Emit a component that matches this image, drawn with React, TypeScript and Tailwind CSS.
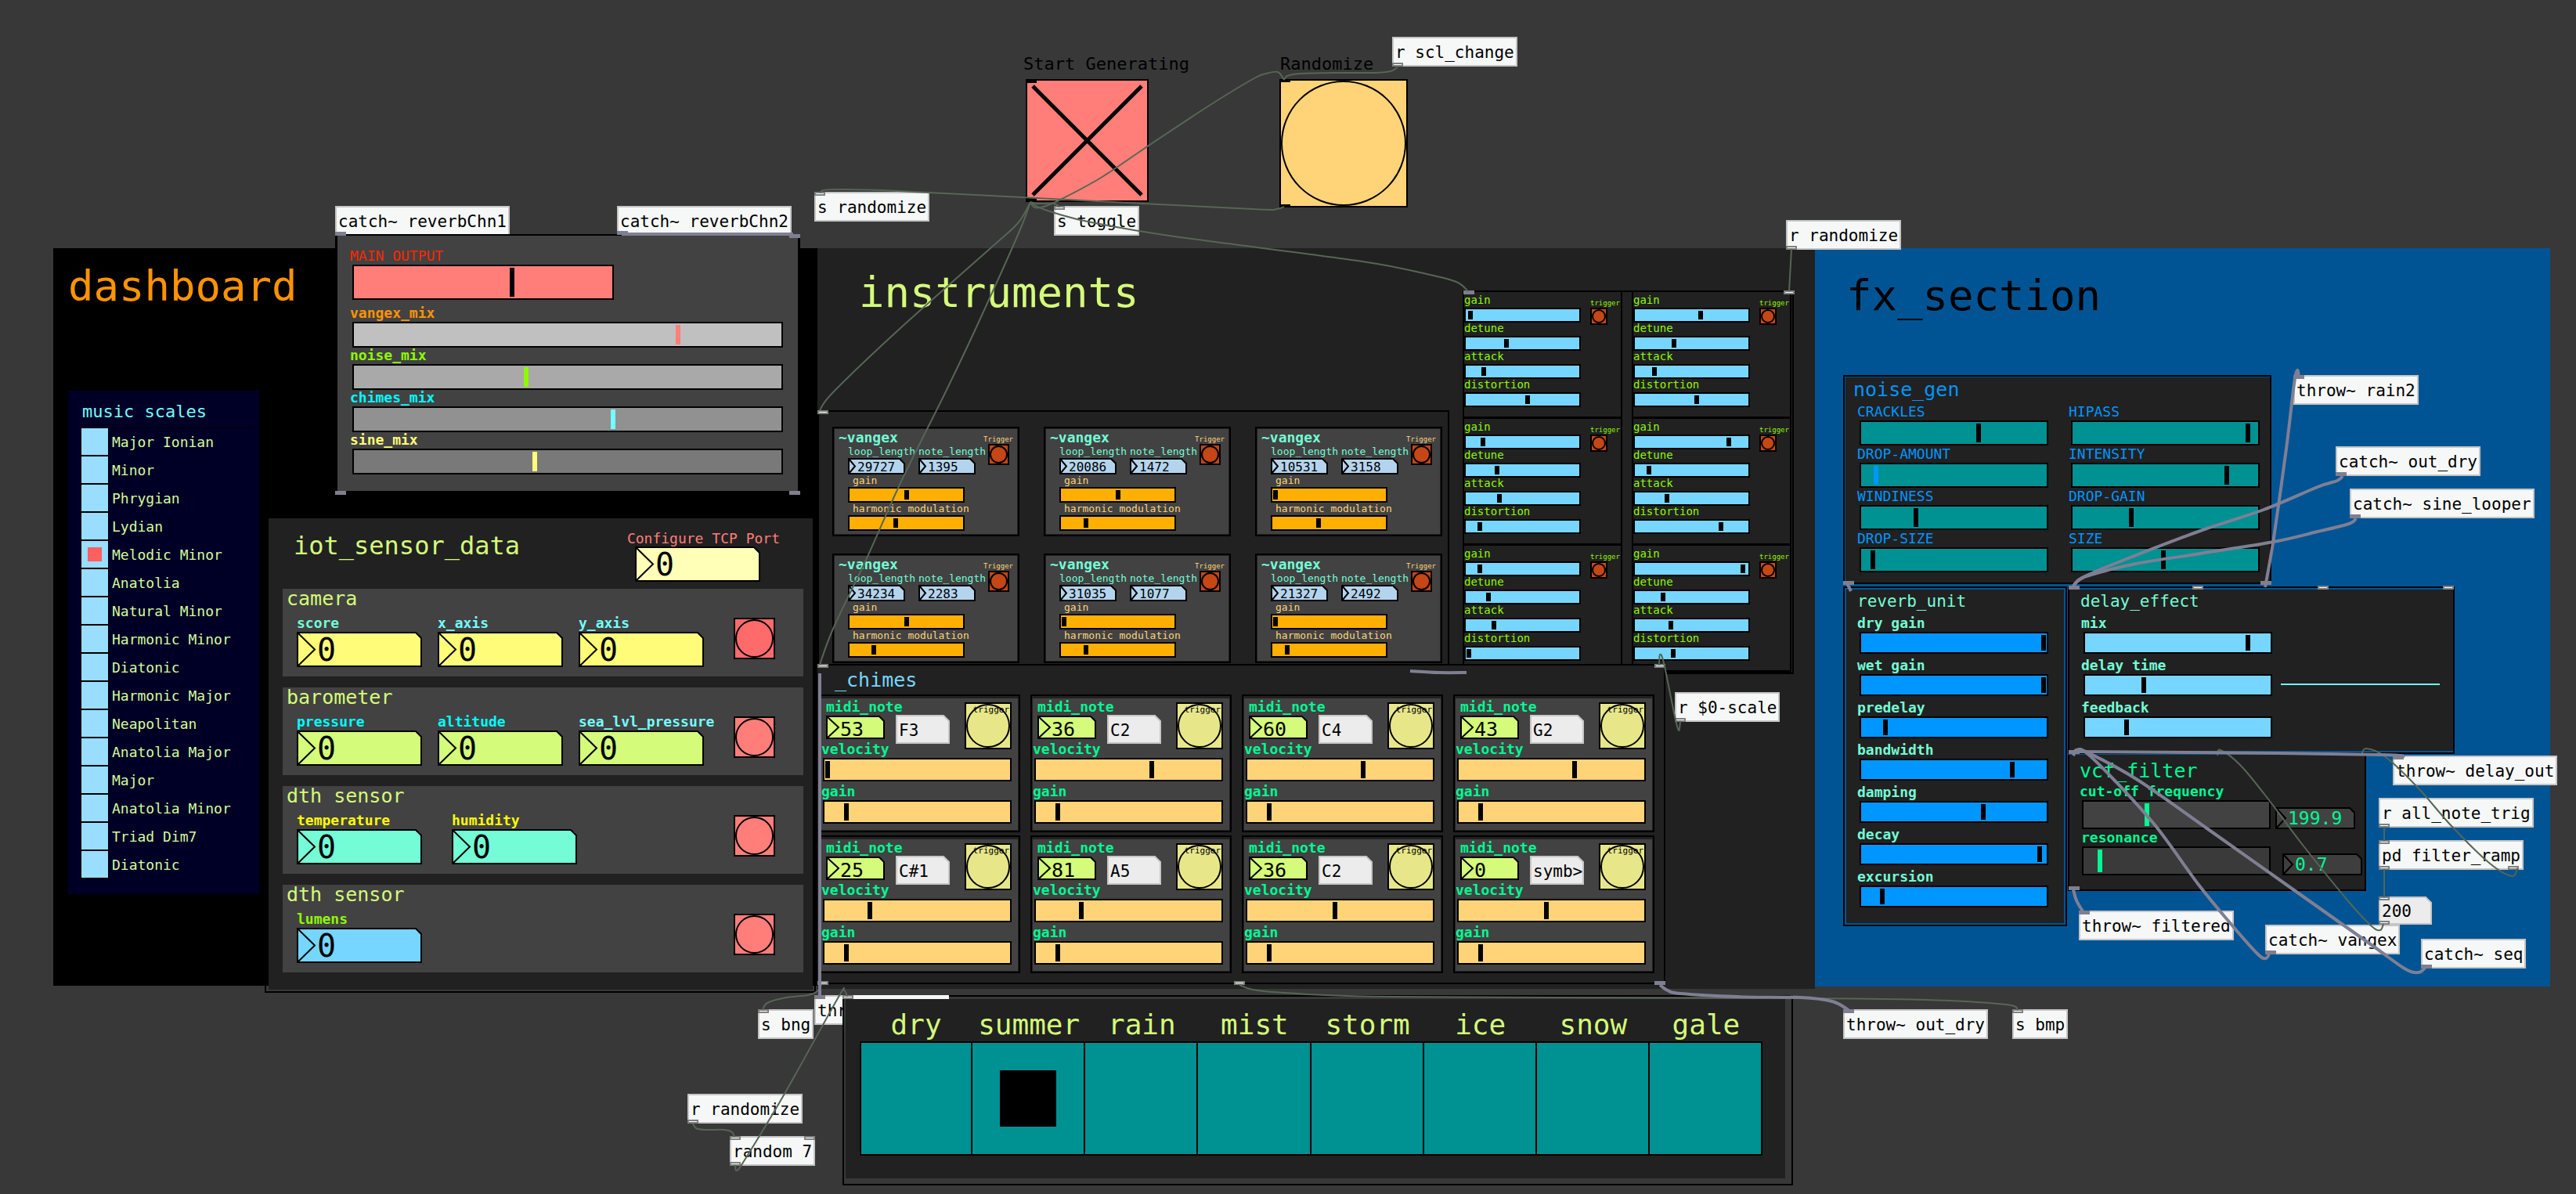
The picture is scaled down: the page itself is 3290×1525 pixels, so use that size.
import React from 'react';

type Pt = [number, number];

/* ---------- canvas primitives ---------- */

function At({ x, y, children }: { x: number; y: number; children: React.ReactNode }) {
  return (
    <div className="absolute" style={{ left: x, top: y }}>
      {children}
    </div>
  );
}

function Slider({ v, max, name, className }: { v: number; max: number; name?: string; className: string }) {
  return (
    <input
      type="range"
      min={0}
      max={max}
      step="any"
      defaultValue={v}
      aria-label={name}
      className={
        'm-0 block w-full appearance-none border-2 border-black px-px py-[2px] [&::-webkit-slider-runnable-track]:h-full [&::-webkit-slider-thumb]:h-full [&::-webkit-slider-thumb]:w-[6px] [&::-webkit-slider-thumb]:appearance-none [&::-webkit-slider-thumb]:rounded-none [&::-webkit-slider-thumb]:bg-current ' +
        className
      }
    />
  );
}

const numKinds = {
  lg: { w: 160, h: 45, arrow: 23, cut: 8, box: 'h-[45px] w-[160px]', input: 'pl-[26px] text-[40px]' },
  md: { w: 75, h: 30, arrow: 16, cut: 7, box: 'h-[30px] w-[75px]', input: 'pl-[18px] pt-1 text-[25px]' },
  sm: { w: 73, h: 21, arrow: 9, cut: 7, box: 'h-[21px] w-[73px]', input: 'pl-[12px] pt-px text-[16px]' },
  fx: { w: 102, h: 28, arrow: 13, cut: 7, box: 'h-[28px] w-[102px]', input: 'pl-[16px] text-[23px]' },
};

function NumBox({
  kind,
  value,
  fill,
  name,
  ink = 'text-black',
}: {
  kind: keyof typeof numKinds;
  value: string;
  fill: string;
  name?: string;
  ink?: string;
}) {
  const k = numKinds[kind];
  return (
    <span className={'relative block font-normal ' + k.box}>
      <svg className="absolute inset-0" width={k.w} height={k.h} stroke="#000" strokeWidth="2">
        <polygon
          fill={fill}
          points={`1,1 ${k.w - k.cut},1 ${k.w - 1},${k.cut} ${k.w - 1},${k.h - 1} 1,${k.h - 1}`}
        />
        <polyline fill="none" points={`1,1 ${k.arrow},${k.h / 2} 1,${k.h - 1}`} />
      </svg>
      <input
        type="text"
        defaultValue={value}
        aria-label={name}
        className={'absolute inset-0 h-full w-full bg-transparent p-0 outline-none ' + ink + ' ' + k.input}
      />
    </span>
  );
}

function Bang({ className, name = 'bang' }: { className: string; name?: string }) {
  return (
    <button type="button" aria-label={name} className={'block border-2 border-black ' + className}>
      <span className="block h-full w-full rounded-full border-2 border-black" />
    </button>
  );
}

function Port({ x, y, sig }: { x: number; y: number; sig?: boolean }) {
  return (
    <div
      className={
        sig ? 'absolute h-[5px] w-[14px] bg-[#7f7f90]' : 'absolute h-[5px] w-[14px] border-2 border-[#808080] bg-white'
      }
      style={{ left: x, top: y }}
    />
  );
}

function Obj({ x, y, text, wide }: { x: number; y: number; text: string; wide?: boolean }) {
  return (
    <div
      className={
        'absolute h-[38px] border-2 border-[#c6c6c6] bg-[#f6f8f8] px-[2px] text-[21px] leading-[36px] whitespace-pre text-black ' +
        (wide ? 'w-[172px]' : '')
      }
      style={{ left: x, top: y }}
    >
      {text}
    </div>
  );
}

/* ---------- dashboard ---------- */

const scales = [
  'Major Ionian', 'Minor', 'Phrygian', 'Lydian', 'Melodic Minor', 'Anatolia', 'Natural Minor', 'Harmonic Minor',
  'Diatonic', 'Harmonic Major', 'Neapolitan', 'Anatolia Major', 'Major', 'Anatolia Minor', 'Triad Dim7', 'Diatonic',
];

function MusicScales() {
  return (
    <fieldset aria-label="music scales" className="w-[244px] bg-[#000026] pt-[15px] pr-2 pb-[19px] pl-4">
      <div className="mb-2 pl-[2px] text-[22px] leading-6 text-[#73fdff]">music scales</div>
      <div className="border-t border-black">
        {scales.map((s, i) => (
          <label key={i} className="flex h-9 items-center gap-1 text-[18px] leading-[38px] text-[#d4fb9c]">
            <span className="flex h-9 w-9 items-center justify-center border-x border-b-2 border-black bg-[#99ddff]">
              <input
                type="radio"
                name="scale"
                defaultChecked={i === 4}
                className="size-[18px] appearance-none checked:bg-[#ff5f5f]"
              />
            </span>
            {s}
          </label>
        ))}
      </div>
    </fieldset>
  );
}

const mixes = [
  { n: 'vangex_mix', c: 'text-[#ff9300]', s: 'bg-[#c0c0c0] text-[#ff7e79]', v: 410 },
  { n: 'noise_mix', c: 'text-[#8efa00]', s: 'bg-[#a9a9a9] text-[#8efa00]', v: 216 },
  { n: 'chimes_mix', c: 'text-[#00fdff]', s: 'bg-[#919191] text-[#73fdff]', v: 327 },
  { n: 'sine_mix', c: 'text-[#fffc79]', s: 'bg-[#797979] text-[#fffc79]', v: 227 },
];

function MixPanel() {
  return (
    <div className="w-[594px] border-x-[3px] border-t-2 border-b-[5px] border-black bg-[#424242] pt-4 pr-[19px] pb-[21px] pl-[19px] text-[18px] leading-[19px]">
      <label className="mb-[7px] block w-[334px] text-[#ff2600]">
        <span className="-ml-[3px] block pb-[2px]">MAIN OUTPUT</span>
        <Slider v={198} max={322} className="h-[45px] bg-[#ff7e79] text-black" />
      </label>
      {mixes.map((m) => (
        <label key={m.n} className={'block ' + m.c}>
          <span className="-ml-[3px] block pb-[2px] font-bold">{m.n}</span>
          <Slider v={m.v} max={538} className={'h-[33px] ' + m.s} />
        </label>
      ))}
    </div>
  );
}

const sensors = [
  { t: 'camera', fill: '#fffc79', bang: 'bg-[#ff6b6b]', gap: 'gap-5', f: [['score', 'text-[#73fcd6]'], ['x_axis', 'text-[#73fdff]'], ['y_axis', 'text-[#73fdff]']] },
  { t: 'barometer', fill: '#d4fb79', bang: 'bg-[#ff7e79]', gap: 'gap-5', f: [['pressure', 'text-[#00fdff]'], ['altitude', 'text-[#00fdff]'], ['sea_lvl_pressure', 'text-[#73fdff]']] },
  { t: 'dth sensor', fill: '#73fcd6', bang: 'bg-[#ff7e79]', gap: 'gap-[38px]', f: [['temperature', 'text-[#fffb00]'], ['humidity', 'text-[#fffb00]']] },
  { t: 'dth sensor', fill: '#76d6ff', bang: 'bg-[#ff7e79]', gap: 'gap-5', f: [['lumens', 'text-[#8efa00]']] },
];

function SensorPanel() {
  return (
    <div className="w-[704px] border-2 border-black pt-[2px] pr-[2px] pb-[2px] pl-[3px]">
      <div className="bg-[#212121] pt-[15px] pr-3 pb-[22px] pl-[18px]">
        <div className="mb-[9px] flex items-start justify-between">
          <h2 className="pt-1 pl-[14px] text-[32px] leading-8 text-[#d4fb79]">iot_sensor_data</h2>
          <label className="mr-[30px] block text-[18px] leading-[21px] text-[#ff7e79]">
            Configure TCP Port
            <span className="block pl-[10px]">
              <NumBox kind="lg" value="0" fill="#ffffb8" />
            </span>
          </label>
        </div>
        <div className="flex flex-col gap-[14px]">
          {sensors.map((s, i) => (
            <section key={i} className="h-[112px] bg-[#424242]">
              <h3 className="mb-2 pl-[5px] text-[25px] leading-[26px] text-[#d4fb79]">{s.t}</h3>
              <div className="flex items-start justify-between pr-[36px] pl-[18px]">
                <div className={'flex ' + s.gap}>
                  {s.f.map(([n, c]) => (
                    <label key={n} className={'block w-[160px] text-[18px] leading-[19px] font-bold whitespace-nowrap ' + c}>
                      <span className="block pb-[2px]">{n}</span>
                      <NumBox kind="lg" value="0" fill={s.fill} />
                    </label>
                  ))}
                </div>
                <Bang className={'mt-[3px] size-[53px] ' + s.bang} name={s.t} />
              </div>
            </section>
          ))}
        </div>
      </div>
    </div>
  );
}

/* ---------- instruments ---------- */

const vangex = [
  { l: '29727', n: '1395', g: 69, h: 55 },
  { l: '20086', n: '1472', g: 69, h: 28 },
  { l: '10531', n: '3158', g: 0, h: 55 },
  { l: '34234', n: '2283', g: 69, h: 27 },
  { l: '31035', n: '1077', g: 0, h: 28 },
  { l: '21327', n: '2492', g: 0, h: 15 },
];

function VangexPanel() {
  return (
    <div className="grid w-[807px] grid-cols-3 gap-x-[31px] gap-y-[22px] border-2 border-black bg-[#212121] pt-[19px] pr-[7px] pb-2 pl-[17px]">
      {vangex.map((c, i) => (
        <div key={i} className="h-[140px] border-2 border-black bg-[#212121] p-px">
          <div className="flex h-full justify-between bg-[#424242] pr-[5px] pl-[5px]">
            <div>
              <div className="text-[18px] leading-[21px] font-bold text-[#73fcd6]">~vangex</div>
              <div className="pl-3 text-[13px] leading-4">
                <div className="flex gap-[17px] text-[#73fcd6]">
                  <label className="block w-[73px] whitespace-nowrap">
                    loop_length
                    <NumBox kind="sm" value={c.l} fill="#b4d4ee" />
                  </label>
                  <label className="block w-[73px] whitespace-nowrap">
                    note_length
                    <NumBox kind="sm" value={c.n} fill="#b4d4ee" />
                  </label>
                </div>
                <label className="block w-[149px] text-[#ffd479]">
                  <span className="block pl-[6px]">gain</span>
                  <Slider v={c.g} max={137} className="h-5 bg-[#ffaf00] text-black" />
                </label>
                <label className="block w-[149px] whitespace-nowrap text-[#ffd479]">
                  <span className="block pl-[6px]">harmonic modulation</span>
                  <Slider v={c.h} max={137} className="h-5 bg-[#ffaf00] text-black" />
                </label>
              </div>
            </div>
            <div className="flex flex-col items-center pt-[7px] text-[9px] leading-3 text-[#ffd479]">
              Trigger
              <Bang className="size-[27px] bg-[#c44715]" name="trigger" />
            </div>
          </div>
        </div>
      ))}
    </div>
  );
}

const sines = [
  [2, 48, 19, 75],
  [80, 46, 21, 75],
  [18, 36, 39, 14],
  [116, 14, 37, 106],
  [14, 25, 32, 0],
  [134, 32, 42, 45],
];
const sineNames = ['gain', 'detune', 'attack', 'distortion'];

function SinePanel() {
  return (
    <div className="grid w-[423px] grid-cols-[204px_204px] gap-x-3 border-2 border-l-0 border-black bg-[#212121] pr-[3px]">
      {sines.map((vals, i) => (
        <div key={i} className="flex h-[162px] border-x-2 border-b-[3px] border-black">
          <div className="w-[149px] pt-[3px]">
            {sineNames.map((n, j) => (
              <label key={n} className="block text-[14px] leading-[15px] text-[#8efa00]">
                <span className="block pb-[2px]">{n}</span>
                <Slider v={vals[j]} max={137} className="h-[19px] bg-[#76d6ff] text-black" />
              </label>
            ))}
          </div>
          <div className="pt-2 pl-3 text-[9px] leading-3 text-[#8efa00]">
            trigger
            <Bang className="size-[22px] bg-[#c44715]" name="trigger" />
          </div>
        </div>
      ))}
    </div>
  );
}

const chimes = [
  { m: '53', n: 'F3', v: 0 },
  { m: '36', n: 'C2', v: 144 },
  { m: '60', n: 'C4', v: 144 },
  { m: '43', n: 'G2', v: 144 },
  { m: '25', n: 'C#1', v: 54 },
  { m: '81', n: 'A5', v: 54 },
  { m: '36', n: 'C2', v: 108 },
  { m: '0', n: 'symb>', v: 108 },
];

function ChimesPanel() {
  return (
    <div className="w-[1083px] border-t-2 border-r-2 border-b-2 border-black bg-[#212121] pb-3">
      <h3 className="pl-[22px] text-[25px] leading-[37px] text-[#76d6ff]">_chimes</h3>
      <div className="grid grid-cols-[257px_257px_257px_257px] gap-x-[13px] gap-y-1 pl-[2px]">
        {chimes.map((c, i) => (
          <div key={i} className="h-[176px] border-2 border-black bg-[#212121] p-px pt-[3px]">
            <div className="h-full bg-[#424242] pr-[8px] pl-[2px] text-[18px] leading-[19px] font-bold text-[#00fa92]">
              <div className="flex items-start justify-between">
                <div className="flex gap-[14px] pt-px pl-1">
                  <label className="block w-[75px] whitespace-nowrap">
                    <span className="block pb-[2px]">midi_note</span>
                    <NumBox kind="md" value={c.m} fill="#d4fb79" />
                  </label>
                  <div className="relative mt-5 h-[37px] w-[69px] font-normal">
                    <svg className="absolute inset-0" width="69" height="37">
                      <polygon points="1,1 61,1 68,8 68,36 1,36" fill="#ececec" stroke="#c6c6c6" strokeWidth="2" />
                    </svg>
                    <input
                      aria-label="note name"
                      defaultValue={c.n}
                      className="absolute inset-0 h-full w-full bg-transparent pt-[2px] pl-1 text-[21px] text-black outline-none"
                    />
                  </div>
                </div>
                <div className="relative pt-[5px] font-normal">
                  <Bang className="size-[60px] bg-[#e7e78a]" name="trigger" />
                  <span className="pointer-events-none absolute top-[9px] right-[3px] text-[11px] leading-3 text-black">
                    trigger
                  </span>
                </div>
              </div>
              <label className="-mt-[10px] block w-[150px] whitespace-nowrap">
                <span className="-ml-[2px] block pb-[2px]">velocity</span>
                <span className="block w-[241px]">
                  <Slider v={c.v} max={229} className="h-[30px] bg-[#ffd479] text-black" />
                </span>
              </label>
              <label className="mt-[3px] block">
                <span className="-ml-[2px] block pb-[2px]">gain</span>
                <span className="block w-[241px]">
                  <Slider v={24} max={229} className="h-[30px] bg-[#ffd479] text-black" />
                </span>
              </label>
            </div>
          </div>
        ))}
      </div>
    </div>
  );
}

/* ---------- effects ---------- */

const noise: [string, number, string][] = [
  ['CRACKLES', 146, 'text-black'],
  ['HIPASS', 220, 'text-black'],
  ['DROP-AMOUNT', 15, 'text-[#0096ff]'],
  ['INTENSITY', 193, 'text-black'],
  ['WINDINESS', 66, 'text-black'],
  ['DROP-GAIN', 71, 'text-black'],
  ['DROP-SIZE', 11, 'text-black'],
  ['SIZE', 112, 'text-black'],
];

function NoisePanel() {
  return (
    <div className="w-[547px] border-2 border-black bg-[#005493] pt-px pl-px">
      <div className="bg-[#212121] pt-[3px] pr-3 pb-[13px] pl-[18px]">
        <h3 className="mb-1 -ml-[8px] text-[25px] leading-[26px] text-[#0096ff]">noise_gen</h3>
        <div className="grid grid-cols-[241px_241px] gap-x-[29px] text-[18px] leading-[22px] text-[#0096ff]">
          {noise.map(([n, v, c]) => (
            <label key={n} className="block">
              <span className="-ml-[3px] block">{n}</span>
              <Slider v={v} max={229} className={'h-8 bg-[#009193] ' + c} />
            </label>
          ))}
        </div>
      </div>
    </div>
  );
}

function EffectFields({ items, bar }: { items: [string, number][]; bar: string }) {
  return (
    <div className="flex w-[241px] flex-col gap-1 text-[18px] leading-[22px] text-[#73fcd6]">
      {items.map(([n, v]) => (
        <label key={n} className="block">
          <span className="-ml-[3px] block font-bold">{n}</span>
          <Slider v={v} max={229} className={'h-[28px] text-black ' + bar} />
        </label>
      ))}
    </div>
  );
}

const reverb: [string, number][] = [
  ['dry gain', 229],
  ['wet gain', 229],
  ['predelay', 27],
  ['bandwidth', 189],
  ['damping', 152],
  ['decay', 224],
  ['excursion', 23],
];

function ReverbPanel() {
  return (
    <div className="w-[286px] border-2 border-black bg-[#005493] p-[2px]">
      <div className="bg-[#212121] pt-[3px] pb-5 pl-[17px]">
        <h3 className="mb-[5px] -ml-[3px] text-[21px] leading-6 text-[#73fcd6]">reverb_unit</h3>
        <EffectFields items={reverb} bar="bg-[#0096ff]" />
      </div>
    </div>
  );
}

function DelayPanel() {
  return (
    <div className="w-[494px] border-2 border-black bg-[#005493] py-[2px]">
      <div className="bg-[#212121] pt-[3px] pb-4 pl-[18px]">
        <h3 className="mb-[5px] -ml-[4px] text-[21px] leading-6 text-[#73fcd6]">delay_effect</h3>
        <div className="flex items-center gap-[11px]">
          <EffectFields items={[['mix', 204], ['delay time', 71], ['feedback', 49]]} bar="bg-[#76d6ff]" />
          <div className="mt-5 h-[2px] w-[203px] bg-[#73f5f0]" />
        </div>
      </div>
    </div>
  );
}

function VcfPanel() {
  return (
    <div className="h-[174px] w-[381px] border-2 border-t-0 border-black bg-[#212121] pt-2 pl-4 text-[18px] leading-[22px] text-[#00fa92]">
      <h3 className="mb-[2px] -ml-[3px] text-[25px] leading-[26px]">vcf_filter</h3>
      <div className="flex items-end gap-[6px]">
        <label className="block w-[241px] whitespace-nowrap">
          <span className="-ml-[3px] block font-bold">cut-off frequency</span>
          <Slider v={77} max={229} className="h-[37px] bg-[#424242] text-[#00fa92]" />
        </label>
        <NumBox kind="fx" value="199.9" fill="#424242" ink="text-[#00fa92]" name="frequency" />
      </div>
      <div className="flex items-end gap-[15px]">
        <label className="block w-[241px]">
          <span className="-ml-[1px] block font-bold">resonance</span>
          <Slider v={17} max={229} className="h-[37px] bg-[#3a3a3a] text-[#00fa92]" />
        </label>
        <NumBox kind="fx" value="0.7" fill="#3e3e3e" ink="text-[#00fa92]" name="resonance value" />
      </div>
    </div>
  );
}

/* ---------- presets ---------- */

const presets = ['dry', 'summer', 'rain', 'mist', 'storm', 'ice', 'snow', 'gale'];

function PresetPanel() {
  return (
    <div className="w-[1214px] border-2 border-black bg-[#383838] pt-[3px] pr-2 pb-[7px] pl-[2px]">
      <fieldset aria-label="presets" className="bg-[#212121] px-[18px] pt-3 pb-[29px]">
        <div className="grid w-[1153px] grid-cols-8 text-center text-[36px] leading-[42px] text-[#d4fb79]">
          {presets.map((p, i) => (
            <label key={p} className="block whitespace-nowrap">
              <span className="block">{p}</span>
              <span
                className={
                  'flex h-[146px] items-center justify-center border-y-2 border-r-2 border-black bg-[#009193] ' +
                  (i === 0 ? 'border-l-2' : '')
                }
              >
                <input
                  type="radio"
                  name="preset"
                  defaultChecked={i === 1}
                  className="size-[72px] appearance-none checked:bg-black"
                />
              </span>
            </label>
          ))}
        </div>
      </fieldset>
    </div>
  );
}

/* ---------- patch cords ---------- */

function curve(p: Pt[]) {
  let d = `M${p[0][0]} ${p[0][1]}`;
  for (let i = 0; i < p.length - 1; i++) {
    const a = p[Math.max(i - 1, 0)];
    const b = p[i];
    const c = p[i + 1];
    const e = p[Math.min(i + 2, p.length - 1)];
    d += ` C${b[0] + (c[0] - a[0]) / 6} ${b[1] + (c[1] - a[1]) / 6} ${c[0] - (e[0] - b[0]) / 6} ${c[1] - (e[1] - b[1]) / 6} ${c[0]} ${c[1]}`;
  }
  return d;
}

const controlCords: Pt[][] = [
  [[1785, 86], [1776, 91], [1755, 93], [1712, 93], [1660, 94], [1644, 97], [1640, 102]],
  [[1316, 258], [1320, 264], [1329, 265], [1350, 257], [1406, 227], [1464, 188], [1541, 137], [1600, 101], [1617, 94], [1632, 92], [1640, 102]],
  [[1316, 258], [1325, 260], [1345, 260], [1353, 264]],
  [[1316, 258], [1300, 285], [1265, 317], [1149, 420], [1065, 500], [1047, 524]],
  [[1316, 258], [1300, 300], [1246, 420], [1208, 500], [1150, 617], [1107, 713], [1064, 803], [1047, 849]],
  [[1316, 258], [1325, 264], [1347, 272], [1394, 284], [1500, 302], [1734, 333], [1822, 350], [1860, 360], [1875, 372]],
  [[1640, 264], [1630, 267], [1600, 267], [1382, 256], [1147, 244], [1070, 242], [1052, 243], [1047, 246]],
  [[2288, 318], [2285, 372]],
  [[2146, 921], [2144, 933], [2139, 915], [2125, 847], [2120, 836], [2119, 850]],
  [[1049, 1258], [1044, 1266], [1032, 1271], [1004, 1274], [980, 1281], [974, 1290]],
  [[939, 1488], [941, 1495], [952, 1480], [1002, 1397], [1070, 1275], [1078, 1265], [1082, 1273]],
  [[885, 1435], [889, 1441], [900, 1443], [925, 1443], [935, 1446], [938, 1452]],
  [[1583, 1258], [1600, 1264], [1641, 1268], [1778, 1273], [2300, 1275], [2460, 1277], [2562, 1283], [2577, 1290]],
  [[2832, 965], [2836, 958], [2862, 978], [2898, 1022], [2940, 1078], [3000, 1152], [3029, 1183], [3040, 1188], [3044, 1180]],
  [[3016, 965], [3022, 956], [3047, 967], [3089, 1007], [3131, 1055], [3179, 1102], [3208, 1119], [3215, 1109]],
  [[3045, 1056], [3045, 1074]],
  [[3045, 1110], [3045, 1146]],
];

const signalCords: Pt[][] = [
  [[794, 299], [1013, 299]],
  [[2120, 1258], [2130, 1265], [2146, 1269], [2219, 1273], [2300, 1274], [2340, 1279], [2361, 1290]],
  [[1047, 860], [1047, 1272]],
  [[1801, 857], [1837, 859], [1873, 859]],
  [[2359, 745], [2364, 755]],
  [[2647, 750], [2659, 738], [2708, 717], [2810, 678], [2891, 651], [2960, 622], [2985, 614], [2992, 608]],
  [[2647, 750], [2655, 741], [2671, 734], [2728, 720], [2810, 707], [2904, 692], [2960, 679], [3000, 669], [3009, 662]],
  [[2893, 750], [2904, 687], [2920, 573], [2930, 490], [2934, 473], [2936, 481]],
  [[2647, 960], [2800, 961], [3045, 964], [3063, 968]],
  [[2648, 965], [2652, 958], [2664, 961], [2700, 996], [2754, 1056], [2808, 1130], [2850, 1181], [2883, 1218], [2894, 1224], [2899, 1216]],
  [[2648, 965], [2652, 958], [2668, 962], [2730, 996], [2820, 1059], [2940, 1144], [3029, 1207], [3071, 1237], [3089, 1242], [3098, 1235]],
  [[2648, 1136], [2652, 1150], [2660, 1164]],
];

function Cords() {
  return (
    <svg className="pointer-events-none absolute top-0 left-0" width="3290" height="1525" fill="none">
      <g stroke="#566655" strokeWidth="2">
        {controlCords.map((p, i) => (
          <path key={i} d={curve(p)} />
        ))}
      </g>
      <g stroke="#7f7f94" strokeWidth="4">
        {signalCords.map((p, i) => (
          <path key={i} d={curve(p)} />
        ))}
      </g>
    </svg>
  );
}

/* ---------- patch ---------- */

const objects = [
  { x: 1040, y: 245, text: 's randomize' },
  { x: 1346, y: 263, text: 's toggle' },
  { x: 1778, y: 47, text: 'r scl_change' },
  { x: 2281, y: 281, text: 'r randomize' },
  { x: 2139, y: 884, text: 'r $0-scale' },
  { x: 2929, y: 479, text: 'throw~ rain2' },
  { x: 2983, y: 570, text: 'catch~ out_dry' },
  { x: 3001, y: 624, text: 'catch~ sine_looper' },
  { x: 3056, y: 965, text: 'throw~ delay_out' },
  { x: 3038, y: 1019, text: 'r all_note_trig' },
  { x: 3038, y: 1073, text: 'pd filter_ramp' },
  { x: 2655, y: 1163, text: 'throw~ filtered' },
  { x: 2893, y: 1181, text: 'catch~ vangex' },
  { x: 3092, y: 1199, text: 'catch~ seq' },
  { x: 2354, y: 1289, text: 'throw~ out_dry' },
  { x: 2570, y: 1289, text: 's bmp' },
  { x: 968, y: 1289, text: 's bng' },
  { x: 878, y: 1397, text: 'r randomize' },
  { x: 932, y: 1451, text: 'random 7' },
];

const controlPorts: Pt[] = [
  [1040, 245], [1346, 263], [1778, 80], [2281, 314], [2139, 917], [3038, 1052], [3038, 1073], [3038, 1106],
  [3203, 1106], [3038, 1145], [3038, 1176], [2570, 1289], [968, 1289], [878, 1430], [932, 1451], [1027, 1451],
  [932, 1484], [1044, 524], [1044, 848], [2113, 848], [1044, 1253], [1576, 1253], [1076, 1271], [2278, 371],
  [2800, 748], [2960, 748], [3120, 748],
];
const signalPorts: Pt[] = [
  [428, 296], [788, 295], [1008, 299], [428, 627], [1008, 627], [2113, 1253], [2929, 479], [2983, 603], [3001, 657],
  [3056, 965], [2655, 1163], [2893, 1214], [3092, 1232], [2354, 1289], [1040, 1271], [2354, 742], [2887, 742],
  [2642, 748], [2642, 958], [2642, 1132], [1869, 371],
];

export default function App() {
  return (
    <main className="relative min-h-screen w-full overflow-hidden bg-[#383838] font-['DejaVu_Sans_Mono',monospace] text-black">
      <At x={68} y={317}>
        <section className="h-[942px] w-[976px] bg-black" />
      </At>
      <At x={1044} y={317}>
        <section className="h-[946px] w-[1274px] bg-[#212121]" />
      </At>
      <At x={2318} y={317}>
        <section className="h-[943px] w-[939px] bg-[#005493]" />
      </At>

      <At x={87} y={339}>
        <h1 className="text-[54px] leading-none text-[#ff9300]">dashboard</h1>
      </At>
      <At x={1097} y={347}>
        <h1 className="text-[54px] leading-none text-[#d4fb79]">instruments</h1>
      </At>
      <At x={2358} y={351}>
        <h1 className="text-[54px] leading-none text-black">fx_section</h1>
      </At>
      <At x={1307} y={71}>
        <span className="block text-[22px] leading-none">Start Generating</span>
      </At>
      <At x={1635} y={71}>
        <span className="block text-[22px] leading-none">Randomize</span>
      </At>

      <Obj x={428} y={263} text="catch~ reverbChn1" />
      <Obj x={788} y={263} text="catch~ reverbChn2" />

      <At x={1310} y={101}>
        <button type="button" aria-label="Start Generating" className="block size-[157px] border-2 border-black bg-[#ff7e79]">
          <svg className="block h-full w-full" viewBox="0 0 153 153" stroke="#000" strokeWidth="5">
            <path d="M7 7 146 146M146 7 7 146" />
            <path d="M0 1H12M0 152H12" strokeWidth="4" />
          </svg>
        </button>
      </At>
      <At x={1634} y={101}>
        <Bang className="size-[164px] bg-[#ffd479]" name="Randomize" />
      </At>
      <div className="absolute top-[101px] left-[1634px] h-[4px] w-[14px] bg-black" />
      <div className="absolute top-[261px] left-[1634px] h-[4px] w-[14px] bg-black" />

      <At x={87} y={499}>
        <MusicScales />
      </At>
      <At x={428} y={299}>
        <MixPanel />
      </At>
      <At x={338} y={658}>
        <SensorPanel />
      </At>

      <At x={1044} y={524}>
        <VangexPanel />
      </At>
      <At x={1868} y={371}>
        <SinePanel />
      </At>
      <At x={1044} y={848}>
        <ChimesPanel />
      </At>

      <At x={2354} y={479}>
        <NoisePanel />
      </At>
      <At x={2354} y={749}>
        <ReverbPanel />
      </At>
      <At x={2641} y={749}>
        <DelayPanel />
      </At>
      <At x={2641} y={964}>
        <VcfPanel />
      </At>

      {objects.map((o, i) => (
        <Obj key={i} {...o} />
      ))}
      <Obj x={1040} y={1271} text="thr" wide />
      <At x={3038} y={1145}>
        <div className="relative h-9 w-[68px]">
          <svg className="absolute inset-0" width="68" height="36">
            <polygon points="1,1 60,1 67,8 67,35 1,35" fill="#ececec" stroke="#c6c6c6" strokeWidth="2" />
          </svg>
          <input
            aria-label="ramp time"
            defaultValue="200"
            className="absolute inset-0 h-full w-full bg-transparent pt-[2px] pl-1 text-[21px] outline-none"
          />
        </div>
      </At>
      <At x={1076} y={1271}>
        <PresetPanel />
      </At>
      <div className="absolute top-[1271px] left-[1090px] h-[5px] w-[122px] bg-[#f6f8f8]" />

      {controlPorts.map(([x, y], i) => (
        <Port key={i} x={x} y={y} />
      ))}
      {signalPorts.map(([x, y], i) => (
        <Port key={i} x={x} y={y} sig />
      ))}
      <Cords />
    </main>
  );
}
